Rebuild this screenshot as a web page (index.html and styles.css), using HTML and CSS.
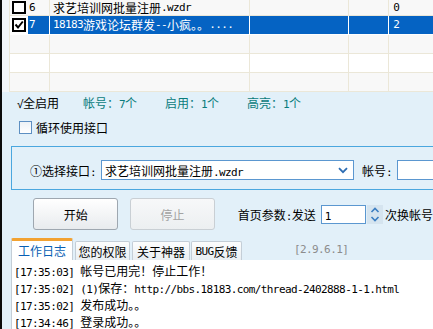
FILE: index.html
```html
<!DOCTYPE html>
<html lang="zh">
<head>
<meta charset="utf-8">
<title>群发</title>
<link rel="stylesheet" href="styles.css">
</head>
<body>
<div class="win">
  <div class="gridarea">
    <div class="grid">
      <div class="row alt first">
        <div class="c c1"><span class="box"></span><span class="num"><span class="m">6</span></span></div>
        <div class="c c2">求艺培训网批量注册<span class="m">.wzdr</span></div>
        <div class="c c3"></div>
        <div class="c c4"></div>
        <div class="c c5"><span class="m">0</span></div>
      </div>
      <div class="row sel">
        <div class="c c1"><span class="box"><svg width="10" height="10" viewBox="0 0 10 10"><path d="M1.5 4.5 L4 7.5 L8.8 1.5" fill="none" stroke="#000" stroke-width="2"/></svg></span><span class="num"><span class="m">7</span></span></div>
        <div class="c c2"><span class="m">18183</span>游戏论坛群发<span class="m">--</span>小疯。。<span class="m">....</span></div>
        <div class="c c3"></div>
        <div class="c c4"></div>
        <div class="c c5"><span class="m">2</span></div>
      </div>
      <div class="row alt">
        <div class="c c1"></div><div class="c c2"></div><div class="c c3"></div><div class="c c4"></div><div class="c c5"></div>
      </div>
      <div class="row">
        <div class="c c1"></div><div class="c c2"></div><div class="c c3"></div><div class="c c4"></div><div class="c c5"></div>
      </div>
      <div class="row alt">
        <div class="c c1"></div><div class="c c2"></div><div class="c c3"></div><div class="c c4"></div><div class="c c5"></div>
      </div>
    </div>
  </div>

  <div class="panel">
    <div class="status">
      <span class="st st1"><span class="m">√</span>全启用</span>
      <span class="st st2 teal">帐号：<span class="m">7</span>个</span>
      <span class="st st3 teal">启用：<span class="m">1</span>个</span>
      <span class="st teal">高亮：<span class="m">1</span>个</span>
    </div>

    <div class="loop">
      <span class="cbox"></span>
      <span class="loop-label">循环使用接口</span>
    </div>

    <div class="group">
      <div class="grow">
        <span class="glabel">①选择接口<span class="m">:</span></span>
        <div class="combo">
          <span class="combo-text">求艺培训网批量注册<span class="m">.wzdr</span></span>
          <svg class="combo-arrow" width="10" height="7" viewBox="0 0 10 7"><path d="M1 1.2 L5 5.2 L9 1.2" fill="none" stroke="#2d6db3" stroke-width="1.8"/></svg>
        </div>
        <span class="alabel">帐号<span class="m">:</span></span>
        <div class="acct"></div>
      </div>
    </div>

    <div class="actions">
      <div class="btn">开始</div>
      <div class="btn btn-off">停止</div>
      <span class="plabel">首页参数<span class="m">:</span>发送</span>
      <div class="num-input"><span class="m">1</span></div>
      <div class="spin">
        <svg width="16" height="19" viewBox="0 0 16 19"><path d="M4.5 7 L8 3.5 L11.5 7" fill="none" stroke="#3b7ec2" stroke-width="1.6"/><path d="M4.5 12 L8 15.5 L11.5 12" fill="none" stroke="#3b7ec2" stroke-width="1.6"/></svg>
      </div>
      <span class="slabel">次换帐号</span>
    </div>

    <div class="tabs">
      <div class="tab tab-on">工作日志</div>
      <div class="tab tab2">您的权限</div>
      <div class="tab tab3">关于神器</div>
      <div class="tab tab4"><span class="m">BUG</span>反馈</div>
      <span class="ver m">[2.9.6.1]</span>
    </div>

    <div class="log">
      <div class="line"><span class="m">[17:35:03] </span>帐号已用完！停止工作！</div>
      <div class="line"><span class="m">[17:35:02] (1)</span>保存：<span class="m">http://bbs.18183.com/thread-2402888-1-1.html</span></div>
      <div class="line"><span class="m">[17:35:02] </span>发布成功。。</div>
      <div class="line"><span class="m">[17:34:46] </span>登录成功。。</div>
    </div>
  </div>
</div>
</body>
</html>
```
FILE: styles.css
```css
* { box-sizing: border-box; }
html, body {
  margin: 0;
  padding: 0;
  width: 433px;
  height: 329px;
  overflow: hidden;
  background: #e2f0f9;
}
body {
  font-family: "Noto Sans CJK SC", sans-serif;
  font-size: 12px;
  color: #000;
}
.m {
  font-family: "DejaVu Sans Mono", monospace;
  font-size: 11px;
  letter-spacing: -0.6px;
}
.win {
  border-left: 2px solid #0b0b0b;
  height: 329px;
  width: 433px;
}

/* grid */
.gridarea {
  height: 92px;
  background: #f3f6f9;
  padding-left: 7px;
  overflow: hidden;
}
.grid {
  border-left: 1px solid #ebe7d8;
  width: 500px;
}
.row {
  display: flex;
  height: 19px;
  background: #fff;
}
.row.alt { background: #f8f8f8; }
.c {
  height: 19px;
  border-right: 1px solid #ebe7d8;
  border-bottom: 1px solid #ebe7d8;
  display: flex;
  align-items: center;
  line-height: 12px;
  white-space: nowrap;
  overflow: hidden;
}
.row.first, .row.first .c { height: 16px; }
.c1 { width: 40px; padding-left: 2px; }
.c2 { width: 200px; padding-left: 3px; }
.c3 { width: 100px; }
.c4 { width: 40px; }
.c5 { width: 120px; padding-left: 4px; }
.box {
  width: 14px;
  height: 14px;
  border: 2px solid #000;
  background: #fff;
  display: flex;
  align-items: center;
  justify-content: center;
}
.row.first .box { height: 13px; }
.num {
  margin-left: 2px;
  width: 21px;
  height: 18px;
  padding-left: 1px;
  display: flex;
  align-items: center;
}
.row.sel .c { border-color: #fff; }
.row.sel .c2, .row.sel .c3, .row.sel .c4, .row.sel .c5 {
  background: #0563c3;
  color: #fff;
}
.row.sel .num { background: #0563c3; color: #fff; }

/* panel */
.panel { width: 431px; }
.status {
  height: 20px;
  display: flex;
  align-items: center;
  padding-left: 15px;
}
.st { white-space: nowrap; }
.st1 { width: 66px; }
.st2 { width: 82px; }
.st3 { width: 82px; }
.teal { color: #0a7c7c; }

.loop {
  margin-top: 7px;
  height: 16px;
  display: flex;
  align-items: center;
  padding-left: 17px;
}
.cbox {
  width: 13px;
  height: 13px;
  border: 1px solid #5d8fc2;
  background: linear-gradient(#eef2f6, #fff);
}
.loop-label { margin-left: 4px; }

.group {
  margin-top: 11px;
  margin-left: 9px;
  width: 520px;
  height: 44px;
  border: 1px solid #4aa7df;
  padding-top: 13px;
  padding-left: 18px;
}
.grow {
  display: flex;
  align-items: center;
  height: 20px;
  white-space: nowrap;
}
.glabel { width: 66px; }
.combo {
  margin-left: 5px;
  width: 253px;
  height: 20px;
  border: 1px solid #5b97d0;
  background: #fff;
  display: flex;
  align-items: center;
  padding-left: 3px;
}
.combo-text { flex: 1; }
.combo-arrow { margin-right: 5px; }
.alabel { margin-left: 8px; }
.acct {
  margin-left: 5px;
  width: 60px;
  height: 20px;
  border: 1px solid #5b97d0;
  background: #fff;
}

.actions {
  margin-top: 8px;
  height: 32px;
  display: flex;
  align-items: center;
  padding-left: 31px;
  white-space: nowrap;
}
.btn {
  width: 89px;
  height: 32px;
  border: 1px solid #9ea7b0;
  border-radius: 3px;
  background: linear-gradient(#ffffff, #e8ebee);
  display: flex;
  align-items: center;
  justify-content: center;
}
.btn-off {
  width: 88px;
  margin-left: 12px;
  border-color: #c9cfd4;
  background: linear-gradient(#f7f8f9, #eceff1);
  color: #a3a3a3;
}
.plabel { margin-left: 23px; }
.num-input {
  margin-left: 5px;
  width: 47px;
  height: 19px;
  border: 1px solid #5b97d0;
  background: #fff;
  padding-left: 3px;
  line-height: 17px;
}
.spin {
  margin-left: 1px;
  width: 16px;
  height: 19px;
  background: #d5e4ef;
  display: flex;
}
.slabel { margin-left: 2px; }

.tabs {
  margin-top: 8px;
  height: 22px;
  display: flex;
  align-items: flex-end;
  padding-left: 9px;
  white-space: nowrap;
}
.tab {
  height: 19px;
  border: 1px solid #c4ced7;
  border-bottom: none;
  border-radius: 2px 2px 0 0;
  background: linear-gradient(#fcfdfd, #e9eef2);
  display: flex;
  align-items: center;
  justify-content: center;
}
.tab-on {
  width: 62px;
  height: 22px;
  border-top: 3px solid #f2a232;
  background: #fff;
  color: #0a5fb4;
}
.tab2 { width: 55px; margin-left: 2px; }
.tab3 { width: 58px; margin-left: 2px; }
.tab4 { width: 51px; margin-left: 1px; }
.ver {
  align-self: center;
  margin-left: 52px;
  color: #8c8c8c;
}

.log {
  margin-left: 9px;
  height: 80px;
  background: #fff;
  border-left: 1px solid #c4ced7;
  padding: 2px 0 0 2px;
  white-space: nowrap;
}
.line {
  height: 17px;
  line-height: 17px;
}
```
